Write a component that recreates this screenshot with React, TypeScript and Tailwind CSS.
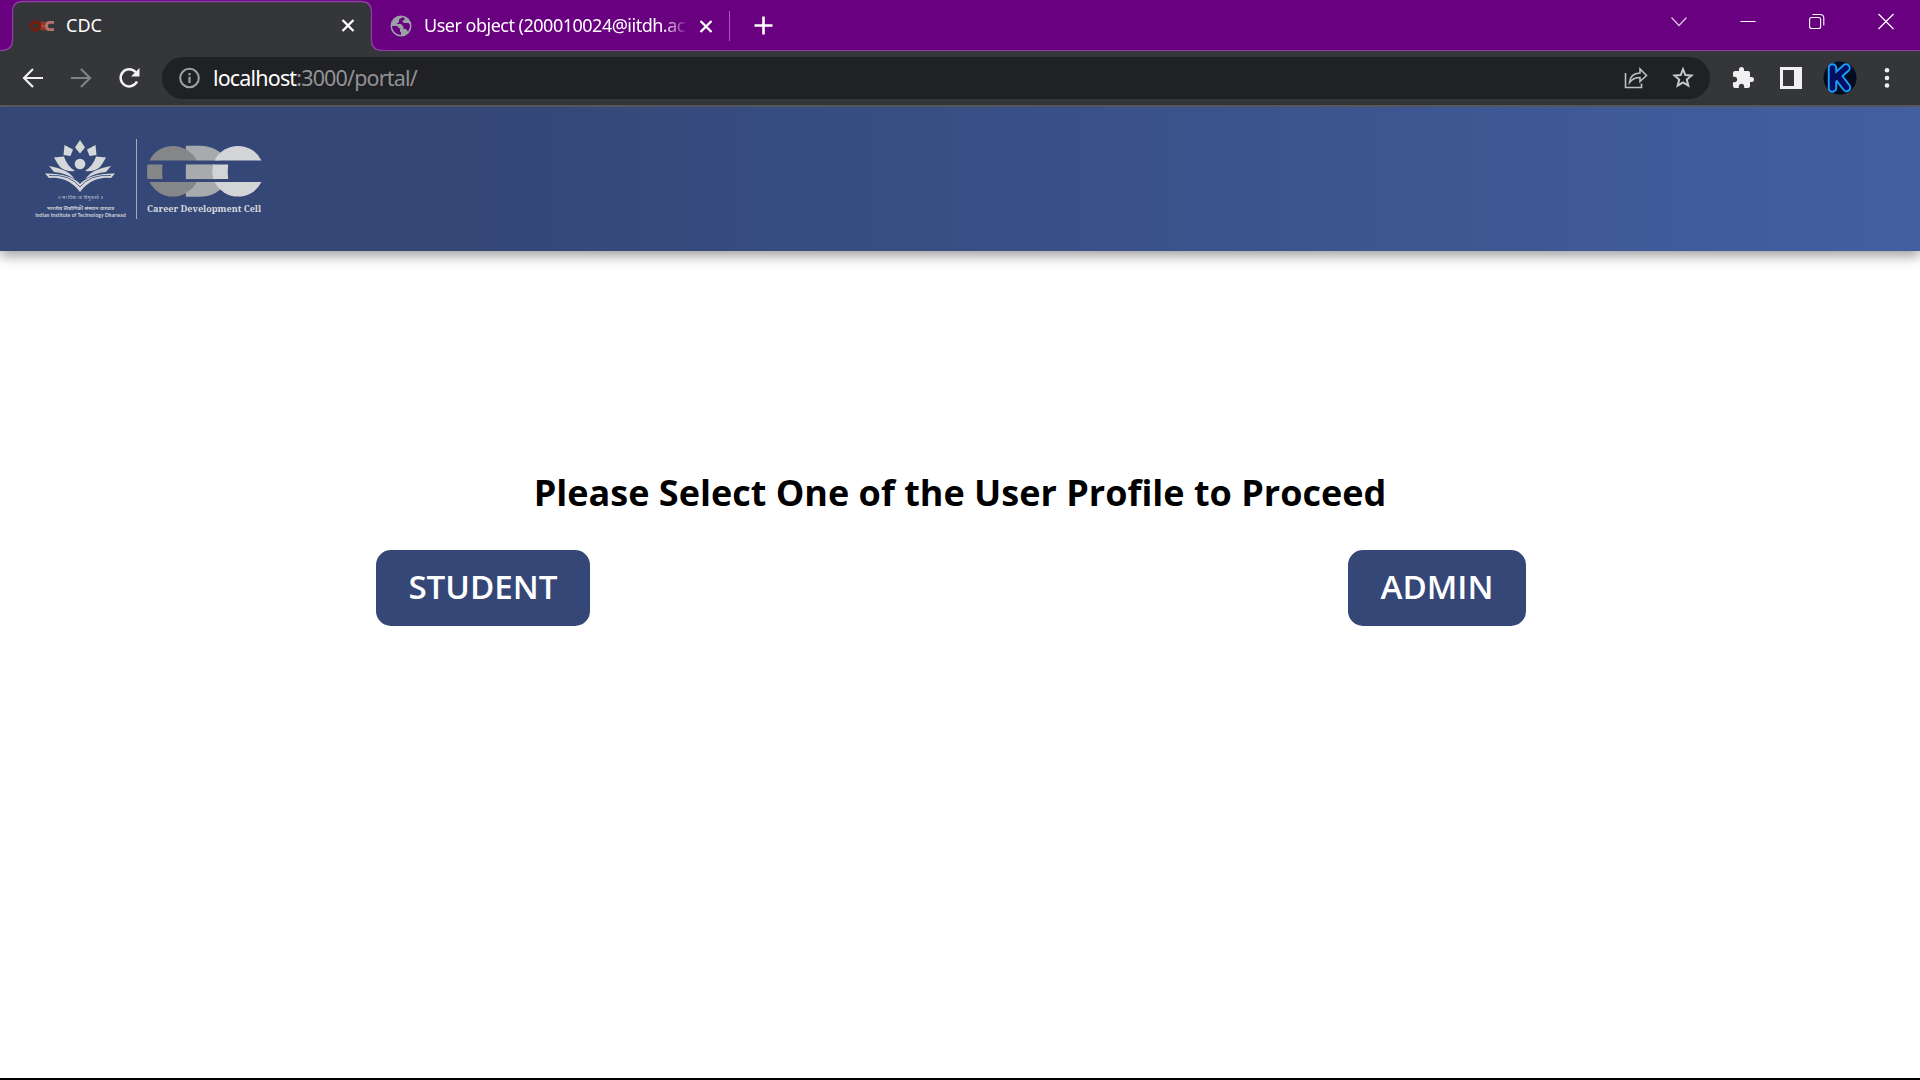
import React from "react";

function ActiveTab() {
  return (
    <div className="relative flex h-[51px] w-[385px] items-center">
      <svg className="absolute left-0 top-0" width="385" height="52" viewBox="0 0 385 52">
        <path d="M0 50.5H2Q12.500 50 12.500 40V12Q12.500 1.500 23 1.500H361Q371.500 1.500 371.500 12V40Q371.500 50.500 382 50.500H385V52H0Z" fill="#35363a" />
        <path d="M0 50.500H2Q12.500 50 12.500 40V12Q12.500 1.500 23 1.500H361Q371.500 1.500 371.500 12V40Q371.500 50.500 382 50.500H385" fill="none" stroke="#8e3fa2" strokeWidth="1.300" />
      </svg>
      <svg className="relative ml-[30px]" width="25" height="14" viewBox="0 0 25 14">
        <path d="M18 4H10.500M10.500 10H18" fill="none" stroke="#8f3a2e" strokeWidth="2.600" />
        <path d="M9 7H16" stroke="#b4493a" strokeWidth="3" />
        <circle cx="5.500" cy="7" r="4.200" fill="none" stroke="#7c1a08" strokeWidth="2.800" />
        <path d="M24 3.300h-4q-3.500 0-3.500 3.700t3.500 3.700h4" fill="none" stroke="#b5756c" strokeWidth="2.800" />
      </svg>
      <span className="relative -mt-px ml-[11px] text-[18px] leading-6 text-white">CDC</span>
      <CloseMark className="absolute left-[341px] top-[18px]" />
    </div>
  );
}

function CloseMark({ className }: { className?: string }) {
  return (
    <svg className={className} width="14" height="14" viewBox="0 0 14 14">
      <path d="M1.500 2L12.500 13M12.500 2L1.500 13" stroke="#fff" strokeWidth="2.300" />
    </svg>
  );
}

function TabStrip() {
  return (
    <div className="relative flex h-[51px] bg-[#680080]">
      <div className="absolute bottom-0 left-0 h-px w-full bg-[#8e3fa2]" />
      <ActiveTab />
      <div className="relative flex h-[51px] w-[346px] items-center">
        <svg className="ml-[5px]" width="22" height="22" viewBox="0 0 22 22">
          <circle cx="11" cy="11" r="10.500" fill="#9aa0a6" />
          <path d="M12.500 2.200L9 4.500V7L6.500 9H11L13.500 11.500V14H16L18 16.500A9 9 0 0 0 20 10L18.500 8H14L12 6L14.500 5V3Z" fill="#680080" />
          <path d="M2 11H7L10 14V16.500L11 17.500V20A9 9 0 0 1 2 11Z" fill="#680080" />
        </svg>
        <span className="-mt-px ml-[12px] w-[263px] overflow-hidden whitespace-nowrap text-[18px] leading-6 tracking-[-0.500px] text-white [mask-image:linear-gradient(to_right,black_238px,transparent_265px)]">
          User object (200010024@iitdh.ac
        </span>
        <CloseMark className="ml-[12px]" />
        <div className="ml-[16px] h-[30px] w-px shrink-0 bg-[#a45cb4]" />
      </div>
      <svg className="ml-[23px] mt-[16px]" width="19" height="19" viewBox="0 0 19 19">
        <path d="M9.500 0.500V18.500M0.500 9.500H18.500" stroke="#fff" strokeWidth="2.600" />
      </svg>
      <div className="ml-auto mr-[26px] flex gap-[53px] pt-[13px]">
        <svg width="16" height="17" viewBox="0 0 16 17" className="text-[#dcc4e2]">
          <path d="M0.500 4.500L8 12.500L15.500 4.500" fill="none" stroke="currentColor" strokeWidth="1.200" />
        </svg>
        <svg width="16" height="17" viewBox="0 0 16 17">
          <path d="M0.500 8.500H15.500" stroke="#fff" />
        </svg>
        <svg width="16" height="17" viewBox="0 0 16 17" fill="none" stroke="#fff" strokeWidth="1.100">
          <rect x="0.600" y="4.500" width="11" height="11" rx="2" />
          <path d="M3.500 1.500H11Q14.800 1.500 14.800 5V12.500" />
        </svg>
        <svg width="16" height="17" viewBox="0 0 16 17">
          <path d="M0.500 1L15.500 16M15.500 1L0.500 16" stroke="#fff" strokeWidth="1.200" />
        </svg>
      </div>
    </div>
  );
}

function Toolbar() {
  return (
    <div className="relative flex h-[56px] items-center border-b-2 border-[#5c5d60] bg-[#35363a]">
      <svg className="ml-[22px]" width="22" height="22" viewBox="0 0 22 22" fill="none" stroke="#f1f1f2" strokeWidth="2.200">
        <path d="M21 11H2.500M11 2L2 11L11 20" />
      </svg>
      <svg className="ml-[26px]" width="22" height="22" viewBox="0 0 22 22" fill="none" stroke="#818286" strokeWidth="2.200">
        <path d="M1 11H19.500M11 2L20 11L11 20" />
      </svg>
      <svg className="ml-[26px]" width="24" height="22" viewBox="0 0 24 22">
        <path d="M19 14.500A8.600 8.600 0 1 1 17.800 5.200" fill="none" stroke="#f1f1f2" strokeWidth="2.500" />
        <path d="M21.500 1V9.500H13Z" fill="#f1f1f2" />
      </svg>
      <div className="ml-[20px] flex h-[42px] w-[1548px] items-center rounded-full bg-[#202124]">
        <svg className="ml-[17px]" width="21" height="22" viewBox="0 0 21 22">
          <circle cx="10.500" cy="11" r="9.300" fill="none" stroke="#9aa0a6" strokeWidth="2.100" />
          <path d="M10.500 9.800V16M10.500 6V8.200" stroke="#9aa0a6" strokeWidth="2.200" />
        </svg>
        <span className="ml-[13px] text-[21.500px] leading-[28px] tracking-[-0.840px] text-[#919296]">
          <span className="text-white">localhost</span>:3000/portal/
        </span>
        <svg className="ml-auto" width="24" height="22" viewBox="0 0 24 22" fill="none" stroke="#bdbec0" strokeWidth="1.600">
          <path d="M1.500 6V20.500H17.500V16.500" />
          <path d="M5.500 15.500C6 9.500 10 6.300 16 6V2L22.500 8.500L16 14.500V10.500C11 10.500 8 12 5.500 15.500Z" />
        </svg>
        <svg className="ml-[24px] mr-[16px]" width="22" height="22" viewBox="0 0 22 22">
          <path d="M11 2.200L13.300 8L19.500 8.500L14.800 12.600L16.300 18.700L11 15.400L5.700 18.700L7.200 12.600L2.500 8.500L8.700 8Z" fill="none" stroke="#c6c7c9" strokeWidth="2" />
        </svg>
      </div>
      <svg className="ml-[21px]" width="24" height="24" viewBox="0 0 24 24">
        <path d="M20.500 11H19V7c0-1.100-.9-2-2-2h-4V3.500a2.500 2.500 0 0 0-5 0V5H4c-1.100 0-1.990.9-1.990 2v3.800H3.500c1.490 0 2.700 1.210 2.700 2.700s-1.210 2.700-2.700 2.700H2V20c0 1.100.9 2 2 2h3.800v-1.500c0-1.490 1.210-2.700 2.700-2.700s2.700 1.210 2.700 2.700V22H17c1.100 0 2-.9 2-2v-4h1.500a2.500 2.500 0 0 0 0-5z" fill="#f1f1f2" />
      </svg>
      <svg className="ml-[25px]" width="22" height="22" viewBox="0 0 22 22">
        <path fillRule="evenodd" d="M0 0H22V22H0ZM3 3V19H14V3Z" fill="#f1f1f2" />
      </svg>
      <svg className="ml-[21px]" width="34" height="34" viewBox="0 0 34 34">
        <circle cx="17" cy="17" r="16.500" fill="#020c20" />
        <path d="M9.500 7V27M9.500 19L23 7M15.500 16L23.500 26.500" fill="none" stroke="#1aa0ff" strokeWidth="9.400" strokeLinecap="round" strokeLinejoin="round" />
        <path d="M9.500 7V27M9.500 19L23 7M15.500 16L23.500 26.500" fill="none" stroke="#040f62" strokeWidth="5.600" strokeLinecap="round" strokeLinejoin="round" />
      </svg>
      <svg className="ml-[27px]" width="6" height="22" viewBox="0 0 6 22" fill="#f1f1f2">
        <circle cx="3" cy="3.200" r="2.300" /><circle cx="3" cy="11" r="2.300" /><circle cx="3" cy="18.500" r="2.300" />
      </svg>
    </div>
  );
}

function InstituteLogo() {
  return (
    <div className="flex w-[91px] flex-col items-center text-[#d5d7d9]">
      <svg width="70" height="53" viewBox="0 0 70 53" fill="currentColor">
        <path d="M35 0L40 7.500L35 13.500L30 7.500Z" />
        <path d="M19.500 5L28 9.500L25.500 16L18.500 15Z" />
        <path d="M50.500 5L42 9.500L44.500 16L51.500 15Z" />
        <circle cx="35" cy="24" r="5.300" />
        <path d="M9 17.500L19 16.500Q22 26 30 31Q20 32 15 27Q12 23 9 17.500Z" />
        <path d="M61 17.500L51 16.500Q48 26 40 31Q50 32 55 27Q58 23 61 17.500Z" />
        <path d="M4 26Q23 29 30 39Q20 33 9 32Z" />
        <path d="M66 26Q47 29 40 39Q50 33 61 32Z" />
        <path d="M0 33.500Q25 33 35 44Q45 33 70 33.500L66 38Q47 36 35 52Q23 36 4 38Z" />
        <path d="M4 35.500Q25 34 35 47Q45 34 66 35.500" fill="none" stroke="#344777" strokeWidth="0.800" />
      </svg>
      <span className="mt-px whitespace-nowrap pl-[2px] font-['Noto_Sans',sans-serif] text-[5px] leading-[6px] opacity-80">॥ सा विद्या या विमुक्तये ॥</span>
      <span className="mt-[5px] whitespace-nowrap pl-[2px] font-['Noto_Sans',sans-serif] text-[5.200px] font-semibold leading-[7px]">भारतीय प्रौद्योगिकी संस्थान धारवाड</span>
      <span className="whitespace-nowrap pl-[2px] font-['Lato',sans-serif] text-[4.900px] font-bold leading-[7px] tracking-[0.140px]">Indian Institute of Technology Dharwad</span>
    </div>
  );
}

function CdcLogo() {
  return (
    <div className="w-[116px]">
      <svg width="115" height="52" viewBox="0 0 114 51">
        <path d="M2.500 15A26 26 0 0 1 49 15Z" fill="#858688" />
        <path d="M0.500 19H15.500Q14.500 26 15.500 33.500H0.500Q-0.500 26 0.500 19Z" fill="#858688" />
        <path d="M2.500 36.500A26 26 0 0 0 49 36.500Z" fill="#858688" />
        <path d="M38.500 0.500H53Q64 0.500 72.500 7V15H49Q46 9 38.500 4Z" fill="#a8abae" />
        <path d="M38.500 19H67V33.500H38.500Z" fill="#a8abae" />
        <path d="M38.500 51H53Q64 51 72.500 44V36.500H49Q46 43 38.500 47Z" fill="#a8abae" />
        <path d="M67 15A26 26 0 0 1 113.500 15Z" fill="#d2d4d6" />
        <path d="M65.500 19H80.500Q79.500 26 80.500 33.500H65.500Q64 26 65.500 19Z" fill="#d2d4d6" />
        <path d="M67 36.500A26 26 0 0 0 113.500 36.500Z" fill="#d2d4d6" />
      </svg>
      <div className="mt-[5px] whitespace-nowrap font-['Noto_Serif','DejaVu_Serif',serif] text-[9px] font-bold leading-[13px] text-[#d8dadd]">Career Development Cell</div>
    </div>
  );
}

export default function App() {
  return (
    <div className="flex h-[1080px] w-[1920px] flex-col overflow-hidden bg-white font-['Open_Sans',sans-serif]">
      <div className="font-['Noto_Sans',sans-serif]">
        <TabStrip />
        <Toolbar />
      </div>
      <header className="relative flex h-[144px] shrink-0 bg-[linear-gradient(to_right,#344777_25%,#425fa0)] pl-[35px] shadow-[0_5px_12px_rgba(0,0,0,0.38)]">
        <div className="-ml-px mr-px pt-[33px]"><InstituteLogo /></div>
        <div className="ml-[10px] mt-[32px] h-[80px] w-px bg-[#a8abae]" />
        <div className="ml-[10px] pt-[38px]"><CdcLogo /></div>
      </header>
      <main className="flex grow flex-col border-b-2 border-black pt-[216px]">
        <h1 className="text-center text-[36px] font-bold leading-[52px] text-black">Please Select One of the User Profile to Proceed</h1>
        <div className="mt-[31px] flex justify-between pl-[376px] pr-[394px]">
          <button className="h-[76px] w-[214px] rounded-[15px] bg-[#344777] pb-[2px] text-[33.200px] font-semibold leading-none text-white">STUDENT</button>
          <button className="h-[76px] w-[178px] rounded-[15px] bg-[#344777] pb-[2px] text-[33.200px] font-semibold leading-none text-white">ADMIN</button>
        </div>
      </main>
    </div>
  );
}
